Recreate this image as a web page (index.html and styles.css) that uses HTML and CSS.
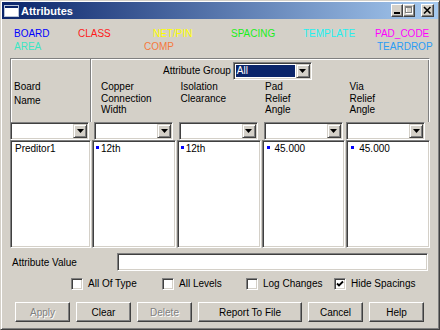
FILE: index.html
```html
<!DOCTYPE html>
<html>
<head>
<meta charset="utf-8">
<title>Attributes</title>
<link rel="stylesheet" href="styles.css">
</head>
<body>
<div class="window">
  <div class="titlebar">
    <svg class="app-icon" width="15" height="12" viewBox="0 0 15 12">
      <rect x="0.5" y="0.5" width="14" height="11" fill="#ffffff" stroke="#b8c4d8"/>
      <rect x="1" y="1" width="13" height="2" fill="#0a246a"/>
    </svg>
    <span class="title">Attributes</span>
    <div class="caption-buttons">
      <span class="cap-btn">
        <svg width="10" height="11" viewBox="0 0 10 11"><rect x="2" y="7" width="6" height="2" fill="#000"/></svg>
      </span>
      <span class="cap-btn">
        <svg width="10" height="11" viewBox="0 0 10 11"><rect x="2.5" y="2.5" width="6" height="6" fill="none" stroke="#ffffff"/><rect x="1.5" y="1.5" width="6" height="6" fill="none" stroke="#808080"/><rect x="1" y="1" width="7" height="2" fill="#808080"/></svg>
      </span>
      <span class="cap-btn cap-close">
        <svg width="11" height="11" viewBox="0 0 11 11"><path d="M2 2 L8.5 8.5 M8.5 2 L2 8.5" stroke="#000" stroke-width="1.6"/></svg>
      </span>
    </div>
  </div>

  <div class="tabs">
    <span class="tab tab-board">BOARD</span>
    <span class="tab tab-class">CLASS</span>
    <span class="tab tab-net">NET/PIN</span>
    <span class="tab tab-spacing">SPACING</span>
    <span class="tab tab-template">TEMPLATE</span>
    <span class="tab tab-padcode">PAD_CODE</span>
    <span class="tab tab-area">AREA</span>
    <span class="tab tab-comp">COMP</span>
    <span class="tab tab-teardrop">TEARDROP</span>
  </div>

  <div class="sheet">
    <div class="sheet-head">
      <div class="head-board">Board<br>Name</div>
      <div class="group-row">
        <span class="group-label">Attribute Group</span>
        <div class="combo combo-group">
          <span class="combo-value"><span class="combo-selected">All</span></span>
          <span class="combo-arrow"><svg width="7" height="4" viewBox="0 0 7 4"><path d="M0 0 H7 L3.5 4 Z" fill="#000"/></svg></span>
        </div>
      </div>
      <div class="col-head col-head-first">Copper<br>Connection<br>Width</div>
      <div class="col-head">Isolation<br>Clearance</div>
      <div class="col-head">Pad<br>Relief<br>Angle</div>
      <div class="col-head">Via<br>Relief<br>Angle</div>
    </div>

    <div class="sheet-filters">
      <div class="combo combo-filter"><span class="combo-value"></span><span class="combo-arrow"><svg width="7" height="4" viewBox="0 0 7 4"><path d="M0 0 H7 L3.5 4 Z" fill="#000"/></svg></span></div>
      <div class="combo combo-filter"><span class="combo-value"></span><span class="combo-arrow"><svg width="7" height="4" viewBox="0 0 7 4"><path d="M0 0 H7 L3.5 4 Z" fill="#000"/></svg></span></div>
      <div class="combo combo-filter"><span class="combo-value"></span><span class="combo-arrow"><svg width="7" height="4" viewBox="0 0 7 4"><path d="M0 0 H7 L3.5 4 Z" fill="#000"/></svg></span></div>
      <div class="combo combo-filter"><span class="combo-value"></span><span class="combo-arrow"><svg width="7" height="4" viewBox="0 0 7 4"><path d="M0 0 H7 L3.5 4 Z" fill="#000"/></svg></span></div>
      <div class="combo combo-filter"><span class="combo-value"></span><span class="combo-arrow"><svg width="7" height="4" viewBox="0 0 7 4"><path d="M0 0 H7 L3.5 4 Z" fill="#000"/></svg></span></div>
    </div>

    <div class="sheet-lists">
      <div class="list"><div class="item item-plain">Preditor1</div></div>
      <div class="list"><div class="item"><span class="mark"></span>12th</div></div>
      <div class="list"><div class="item"><span class="mark"></span>12th</div></div>
      <div class="list"><div class="item item-num"><span class="mark"></span>45.000</div></div>
      <div class="list"><div class="item item-num"><span class="mark"></span>45.000</div></div>
    </div>
  </div>

  <div class="value-row">
    <span class="value-label">Attribute Value</span>
    <div class="value-input"></div>
  </div>

  <div class="check-row">
    <label class="check"><span class="box"></span>All Of Type</label>
    <label class="check"><span class="box"></span>All Levels</label>
    <label class="check"><span class="box"></span>Log Changes</label>
    <label class="check"><span class="box"><svg width="8" height="8" viewBox="0 0 8 8"><path d="M1 3.5 L3 5.5 L7 1.5" fill="none" stroke="#000" stroke-width="1.8"/></svg></span>Hide Spacings</label>
  </div>

  <div class="button-row">
    <span class="btn btn-disabled">Apply</span>
    <span class="btn">Clear</span>
    <span class="btn btn-disabled">Delete</span>
    <span class="btn btn-wide">Report To File</span>
    <span class="btn">Cancel</span>
    <span class="btn">Help</span>
  </div>
</div>
</body>
</html>
```

FILE: styles.css
```css
* { box-sizing: border-box; }

html, body {
  margin: 0;
  padding: 0;
}

body {
  width: 440px;
  height: 330px;
  overflow: hidden;
  background: #d4d0c8;
  font-family: "Liberation Sans", Arial, sans-serif;
  font-size: 10px;
  color: #000;
}

.window {
  width: 440px;
  height: 330px;
  background: #d4d0c8;
  border: 1px solid;
  border-color: #d4d0c8 #404040 #404040 #d4d0c8;
  box-shadow: inset 1px 1px #ffffff, inset -1px -1px #808080;
  padding: 1px;
  display: flex;
  flex-direction: column;
}

/* ---------- title bar ---------- */
.titlebar {
  height: 17px;
  flex: none;
  display: flex;
  align-items: center;
  padding-left: 2px;
  background: linear-gradient(to right, #0a246a, #a6caf0);
}

.app-icon { display: block; flex: none; }

.title {
  margin-left: 2px;
  font-size: 11px;
  font-weight: bold;
  color: #ffffff;
}

.caption-buttons {
  margin-left: auto;
  margin-right: 4px;
  display: flex;
}

.cap-btn {
  width: 12px;
  height: 13px;
  display: flex;
  align-items: center;
  justify-content: center;
  background: #d4d0c8;
  border: 1px solid;
  border-color: #ffffff #404040 #404040 #ffffff;
  box-shadow: inset -1px -1px #808080;
}

.cap-close {
  width: 13px;
  margin-left: 6px;
}

/* ---------- coloured tabs ---------- */
.tabs {
  display: grid;
  grid-template-columns: 64px 75px 78px 72px 72px auto;
  grid-auto-rows: 13px;
  padding: 8px 0 0 12px;
  line-height: 13px;
  flex: none;
}

.tab { white-space: nowrap; }
.tab-board    { color: #0000ff; }
.tab-class    { color: #ff1a1a; }
.tab-net      { color: #ffff00; }
.tab-spacing  { color: #1aee1a; }
.tab-template { color: #22f0f0; }
.tab-padcode  { color: #ff00ff; }
.tab-area     { color: #3ce6c4; grid-column: 1; grid-row: 2; }
.tab-comp     { color: #f57a3c; grid-column: 2 / 4; grid-row: 2; margin-left: 66px; }
.tab-teardrop { color: #2a9cf5; grid-column: 6; grid-row: 2; margin-left: 2px; }

/* ---------- spreadsheet ---------- */
.sheet {
  margin: 5px 0 0 8px;
  width: 420px;
  flex: none;
}

.sheet-head {
  display: grid;
  grid-template-columns: 80px repeat(4, 1fr);
  grid-template-rows: 22px auto;
  column-gap: 1px;
  height: 64px;
  border-top: 1px solid #808080;
  border-left: 1px solid #808080;
  border-right: 1px solid #ffffff;
  box-shadow: inset 1px 1px #ffffff, inset -1px 0 #808080;
}

.head-board {
  grid-column: 1;
  grid-row: 1 / 3;
  padding: 21px 0 0 3px;
  line-height: 14px;
  border-right: 1px solid #808080;
  box-shadow: 1px 0 #ffffff;
}

.group-row {
  grid-column: 2 / 6;
  grid-row: 1;
  display: flex;
  align-items: flex-start;
  padding-top: 3px;
}

.group-label {
  margin-left: 71px;
  margin-right: 2px;
  line-height: 18px;
}

.col-head {
  grid-row: 2;
  padding-left: 4px;
  line-height: 11.5px;
}

.col-head-first { padding-left: 9px; }

/* combo boxes */
.combo {
  display: flex;
  height: 18px;
  background: #ffffff;
  border: 1px solid;
  border-color: #808080 #ffffff #ffffff #808080;
  box-shadow: inset 1px 1px #404040, inset -1px -1px #d4d0c8;
  padding: 1px;
}

.combo-value {
  flex: 1;
  display: flex;
  padding: 1px;
}

.combo-selected {
  flex: 1;
  background: #0a246a;
  color: #ffffff;
  line-height: 12px;
  padding-left: 1px;
}

.combo-arrow {
  width: 14px;
  flex: none;
  display: flex;
  align-items: center;
  justify-content: center;
  background: #d4d0c8;
  border: 1px solid;
  border-color: #d4d0c8 #404040 #404040 #d4d0c8;
  box-shadow: inset 1px 1px #ffffff, inset -1px -1px #808080;
}

.combo-arrow svg { display: block; }

.combo-group { width: 79px; }

.sheet-filters,
.sheet-lists {
  display: grid;
  grid-template-columns: 81px repeat(4, 1fr);
  column-gap: 1px;
}

.combo-filter { width: 79px; margin-left: 2px; }
.combo-filter:first-child { margin-left: 0; }
.combo-filter:last-child { margin-left: 0; }

.list {
  height: 108px;
  background: #ffffff;
  border: 1px solid;
  border-color: #808080 #ffffff #ffffff #808080;
  box-shadow: inset 1px 1px #404040, inset -1px -1px #d4d0c8;
  padding: 1px 1px 1px 3px;
}

.item {
  display: flex;
  align-items: center;
  line-height: 13px;
  white-space: nowrap;
}

.item-plain { padding-left: 1px; }

.mark {
  width: 3px;
  height: 3px;
  background: #0000ff;
  margin-right: 2px;
  margin-bottom: 2px;
  flex: none;
}

.item-num .mark {
  margin-left: 1px;
  margin-right: 5px;
}

/* ---------- attribute value ---------- */
.value-row {
  display: flex;
  align-items: center;
  margin-top: 5px;
  height: 18px;
  flex: none;
}

.value-label {
  width: 115px;
  padding-left: 10px;
}

.value-input {
  width: 311px;
  height: 18px;
  background: #ffffff;
  border: 1px solid;
  border-color: #808080 #ffffff #ffffff #808080;
  box-shadow: inset 1px 1px #404040, inset -1px -1px #d4d0c8;
}

/* ---------- check boxes ---------- */
.check-row {
  display: grid;
  grid-template-columns: 91px 84px 88px auto;
  margin-top: 6px;
  padding-left: 69px;
  height: 13px;
  flex: none;
}

.check {
  display: flex;
  align-items: center;
  gap: 5px;
  white-space: nowrap;
}

.box {
  width: 12px;
  height: 12px;
  flex: none;
  display: flex;
  align-items: center;
  justify-content: center;
  background: #ffffff;
  border: 1px solid;
  border-color: #808080 #ffffff #ffffff #808080;
  box-shadow: inset 1px 1px #404040, inset -1px -1px #d4d0c8;
}

.box svg { display: block; }

/* ---------- buttons ---------- */
.button-row {
  display: flex;
  gap: 6px;
  margin-top: 12px;
  padding-left: 13px;
  flex: none;
}

.btn {
  width: 55px;
  height: 20px;
  display: flex;
  align-items: center;
  justify-content: center;
  background: #d4d0c8;
  border: 1px solid;
  border-color: #ffffff #404040 #404040 #ffffff;
  box-shadow: inset -1px -1px #808080;
  white-space: nowrap;
}

.btn-wide { width: 104px; }

.btn-disabled {
  color: #808080;
  text-shadow: 1px 1px #ffffff;
}
```
